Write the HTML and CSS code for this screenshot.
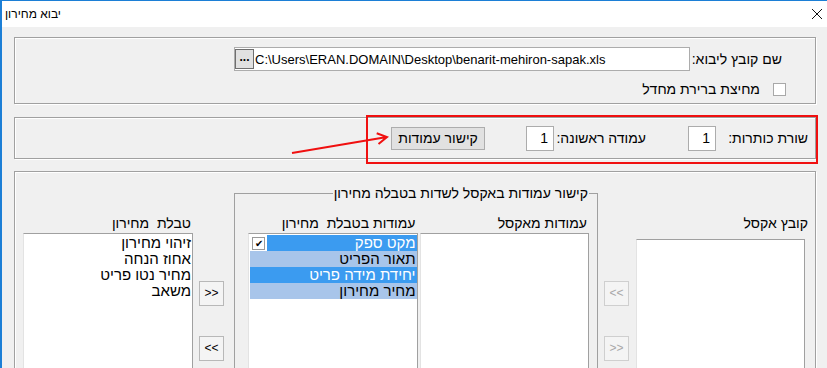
FILE: index.html
```html
<!DOCTYPE html>
<html lang="he">
<head>
<meta charset="UTF-8" />
<title>יבוא מחירון</title>
<link rel="stylesheet" href="styles.css">
</head>
<body>
<div class="window">
  <div class="titlebar">
    <span class="title">יבוא מחירון</span>
    <svg class="close" width="12" height="12" viewBox="0 0 12 12"><path d="M1 1L11 11M11 1L1 11" stroke="#111" stroke-width="1" fill="none"/></svg>
  </div>

  <div class="group file-group" dir="rtl">
    <div class="file-row">
      <span class="file-label">שם קובץ ליבוא:</span>
      <div class="path-box" dir="ltr">
        <span class="browse">...</span>
        <span class="path">C:\Users\ERAN.DOMAIN\Desktop\benarit-mehiron-sapak.xls</span>
      </div>
    </div>
    <div class="check-row">
      <span class="checkbox"></span>
      <span class="check-label">מחיצת ברירת מחדל</span>
    </div>
  </div>

  <div class="group rows-group" dir="rtl">
    <span class="field-label">שורת כותרות:</span>
    <span class="num-box">1</span>
    <span class="field-label second">עמודה ראשונה:</span>
    <span class="num-box">1</span>
    <span class="push-button">קישור עמודות</span>
  </div>

  <div class="group map-group" dir="rtl">
    <div class="col excel-col">
      <div class="col-label">קובץ אקסל</div>
      <div class="listbox excel-list"></div>
    </div>

    <div class="arrows">
      <span class="arrow-btn disabled" dir="ltr">&lt;&lt;</span>
      <span class="arrow-btn disabled" dir="ltr">&gt;&gt;</span>
    </div>

    <fieldset class="link-set">
      <legend>קישור עמודות באקסל לשדות בטבלה מחירון</legend>
      <div class="set-cols">
        <div class="col inner-col">
          <div class="col-label">עמודות מאקסל</div>
          <div class="listbox"></div>
        </div>
        <div class="col inner-col">
          <div class="col-label">עמודות בטבלת&nbsp; מחירון</div>
          <div class="listbox">
            <div class="item first">
              <span class="item-text dark">מקט ספק</span>
              <span class="item-check">&#10004;</span>
            </div>
            <div class="item light">תאור הפריט</div>
            <div class="item dark">יחידת מידה פריט</div>
            <div class="item light">מחיר מחירון</div>
          </div>
        </div>
      </div>
    </fieldset>

    <div class="arrows">
      <span class="arrow-btn" dir="ltr">&gt;&gt;</span>
      <span class="arrow-btn" dir="ltr">&lt;&lt;</span>
    </div>

    <div class="col price-col">
      <div class="col-label">טבלת&nbsp; מחירון</div>
      <div class="listbox">
        <div class="item">זיהוי מחירון</div>
        <div class="item">אחוז הנחה</div>
        <div class="item">מחיר נטו פריט</div>
        <div class="item">משאב</div>
      </div>
    </div>
  </div>

  <!-- annotation drawn over the dialog -->
  <div class="mark-box"></div>
  <svg class="mark-arrow" width="120" height="30" viewBox="285 130 120 30">
    <path d="M292 153L387 137M376.7 133.2L387 137L378.5 144" stroke="#f01010" stroke-width="2" fill="none"/>
  </svg>
</div>
</body>
</html>
```

FILE: styles.css
```css
body {
  margin: 0;
  background: #fff;
  font-family: 'Liberation Sans', Arial, sans-serif;
  font-size: 14px;
  color: #000;
}

.window {
  position: relative;
  width: 825px;
  height: 367px;
  overflow: hidden;
  background: #f0f0f0;
  border-left: 2px solid #1c7fd6;
  border-top: 1px solid #1c7fd6;
}

.titlebar {
  height: 26px;
  background: #fff;
  display: flex;
  align-items: center;
  justify-content: space-between;
  padding: 0 3px 0 3px;
}

.title {
  font-size: 12px;
}

.close {
  margin-right: 1px;
}

.group {
  box-sizing: border-box;
  width: 802px;
  margin-left: 12px;
  border: 1px solid #a0a0a0;
  box-shadow: inset 1px 1px 0 #fff, 1px 1px 0 #fff;
}

/* file group */
.file-group {
  height: 67px;
  margin-top: 10px;
}

.file-row {
  display: flex;
  align-items: center;
  margin-top: 9px;
  padding-right: 33px;
}

.file-label {
  width: 92px;
  line-height: 16px;
}

.path-box {
  box-sizing: border-box;
  width: 456px;
  height: 24px;
  display: flex;
  align-items: center;
  background: #fff;
  border: 1px solid #acacac;
  font-size: 13px;
}

.browse {
  box-sizing: border-box;
  width: 19px;
  height: 20px;
  margin-left: 0;
  background: #e1e1e1;
  border: 1px solid #6f6f6f;
  font-size: 12px;
  font-weight: bold;
  line-height: 14px;
  text-align: center;
}

.path {
  margin-left: 1px;
  white-space: nowrap;
}

.check-row {
  display: flex;
  align-items: center;
  margin-top: 10px;
  padding-right: 29px;
}

.checkbox {
  box-sizing: border-box;
  width: 13px;
  height: 13px;
  background: #fff;
  border: 1px solid #a8a8a8;
}

.check-label {
  margin-right: 13px;
  line-height: 16px;
}

/* header rows group */
.rows-group {
  height: 42px;
  margin-top: 13px;
  display: flex;
  align-items: center;
  padding-right: 7px;
}

.field-label {
  width: 92px;
  line-height: 16px;
}

.field-label.second {
  margin-right: 42px;
}

.num-box {
  box-sizing: border-box;
  width: 28px;
  height: 25px;
  padding-right: 5px;
  background: #fff;
  border: 1px solid #acacac;
  line-height: 23px;
  text-align: right;
}

.push-button {
  box-sizing: border-box;
  width: 94px;
  height: 23px;
  margin-right: 41px;
  background: #e1e1e1;
  border: 1px solid #adadad;
  line-height: 21px;
  text-align: center;
}

/* mapping group */
.map-group {
  height: 200px;
  margin-top: 12px;
  display: flex;
  align-items: flex-start;
  padding-right: 7px;
}

.col-label {
  line-height: 16px;
  white-space: nowrap;
}

.listbox {
  box-sizing: border-box;
  height: 150px;
  background: #fff;
  border: 1px solid #e3e3e3;
  border-top-color: #a0a0a0;
  border-right-color: #a0a0a0;
  padding-top: 1px;
}

.excel-col {
  width: 172px;
  margin-top: 43px;
}

.excel-list {
  width: 169px;
  margin-top: 8px;
  margin-right: 3px;
}

.arrows {
  display: flex;
  flex-direction: column;
  gap: 30px;
  width: 25px;
  margin-top: 109px;
  margin-right: 7px;
}

.link-set + .arrows {
  margin-right: 10px;
}

.arrow-btn {
  box-sizing: border-box;
  width: 25px;
  height: 25px;
  background: #f4f4f4;
  border: 1px solid #b8b8b8;
  font-size: 12px;
  line-height: 23px;
  text-align: center;
}

.arrow-btn.disabled {
  color: #a8a8a8;
  border-color: #cfcfcf;
}

.link-set {
  box-sizing: border-box;
  width: 364px;
  height: 220px;
  margin: 13px 6px 0 0;
  padding: 0 8px 0 13px;
  border: 1px solid #a0a0a0;
  min-width: 0;
}

.link-set legend {
  padding: 0 1px;
  margin-right: 0;
  line-height: 16px;
}

.set-cols {
  display: flex;
  gap: 2px;
  margin-top: 14px;
}

.inner-col {
  width: 170px;
}

.inner-col .col-label {
  padding-right: 2px;
}

.inner-col .listbox {
  margin-top: 2px;
}

.price-col {
  width: 170px;
  margin-top: 43px;
  margin-right: 6px;
}

.price-col .col-label {
  padding-right: 2px;
}

.price-col .listbox {
  margin-top: 2px;
}

.item {
  height: 16px;
  line-height: 16px;
  padding-right: 1px;
  font-size: 15px;
  white-space: nowrap;
}

.inner-col .item {
  margin-left: 1px;
}

.item.first {
  display: flex;
  align-items: center;
  padding-right: 0;
}

.item-text {
  flex: 1;
  height: 16px;
  padding-right: 1px;
}

.item-check {
  box-sizing: border-box;
  width: 13px;
  height: 13px;
  margin: 0 2px 0 2px;
  background: #fff;
  border: 1px solid #9a9a9a;
  font-size: 10px;
  line-height: 11px;
  text-align: center;
}

.dark {
  background: #3b9bf0;
  color: #fff;
}

.light {
  background: #a8c5ea;
}

/* red annotation */
.mark-box {
  position: absolute;
  left: 364px;
  top: 114px;
  width: 448px;
  height: 45px;
  border: 2px solid #f01010;
}

.mark-arrow {
  position: absolute;
  left: 283px;
  top: 129px;
}
```
